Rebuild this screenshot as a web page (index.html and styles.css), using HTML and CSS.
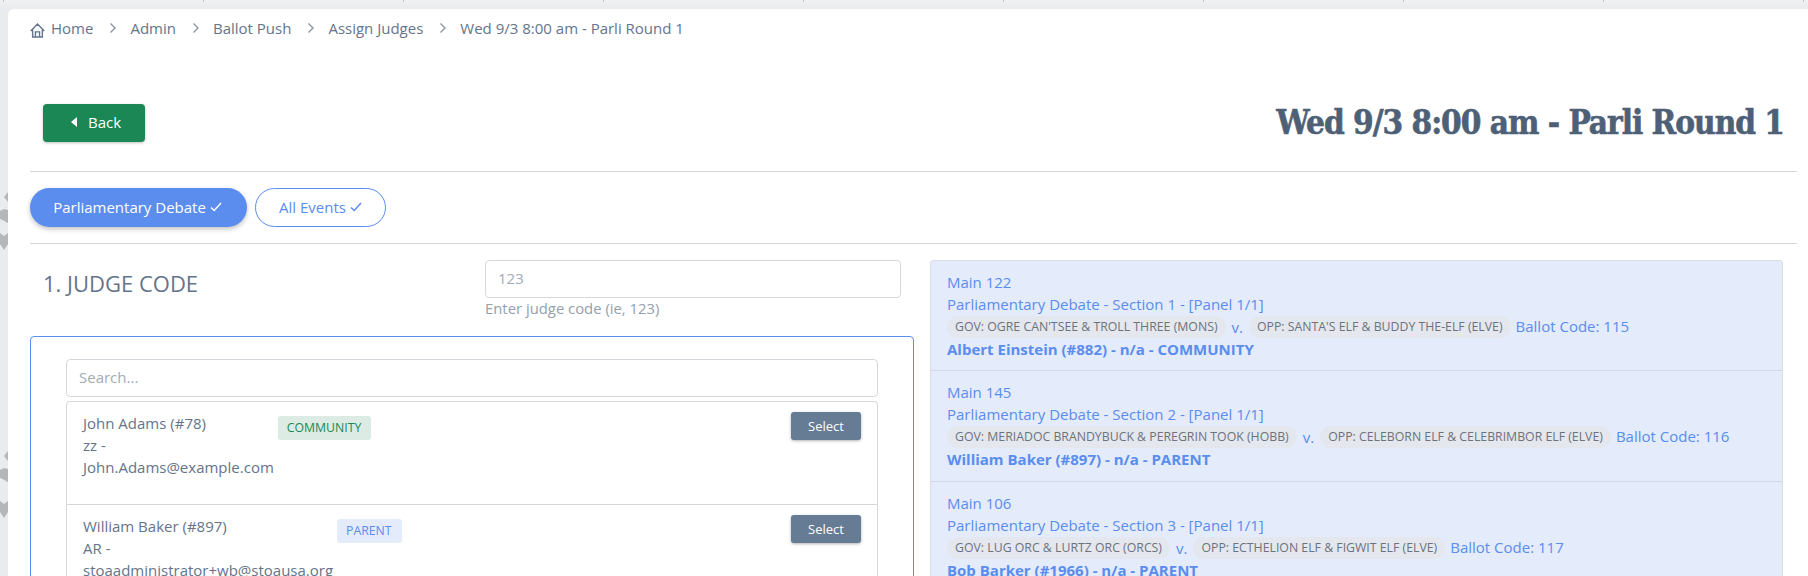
FILE: index.html
```html
<!DOCTYPE html>
<html lang="en">
<head>
<meta charset="utf-8">
<title>Assign Judges</title>
<link rel="stylesheet" href="styles.css">
</head>
<body>
<div class="ticks" aria-hidden="true"></div>
<div class="backdrop" aria-hidden="true">
  <svg class="chevrons" width="8" height="406" viewBox="0 0 8 406"><g fill="#b5b6b8"><path d="M8 22v10l-4-5z"/><path d="M0 41c3-2 5-2 8-1v13c-3-1-4-3-8-4z"/><path d="M0 63l4 3 4-3v11l-4 6-4-6z"/><path d="M8 281v10l-4-5z"/><path d="M0 300c3-2 5-2 8-1v13c-3-1-4-3-8-4z"/><path d="M0 331l4 3 4-3v11l-4 6-4-6z"/></g></svg>
</div>
<main class="card">
  <nav class="crumbs">
    <svg class="home" width="15" height="15" viewBox="0 0 16 16" fill="none" stroke="#64748b" stroke-width="1.5"><path d="M.8 8.500L8 1.200 15.200 8.500M2.800 6.500V15h10.400V6.500M5.800 15V9.500h4.400V15"/></svg>
    <span>Home</span><svg class="sep" width="8" height="12" viewBox="0 0 8 12" fill="none" stroke="#8a96a6" stroke-width="1.4"><path d="M1.500 1.500L6 6l-4.500 4.500"/></svg>
    <span>Admin</span><svg class="sep" width="8" height="12" viewBox="0 0 8 12" fill="none" stroke="#8a96a6" stroke-width="1.4"><path d="M1.500 1.500L6 6l-4.500 4.500"/></svg>
    <span>Ballot Push</span><svg class="sep" width="8" height="12" viewBox="0 0 8 12" fill="none" stroke="#8a96a6" stroke-width="1.4"><path d="M1.500 1.500L6 6l-4.500 4.500"/></svg>
    <span>Assign Judges</span><svg class="sep" width="8" height="12" viewBox="0 0 8 12" fill="none" stroke="#8a96a6" stroke-width="1.4"><path d="M1.500 1.500L6 6l-4.500 4.500"/></svg>
    <span>Wed 9/3 8:00 am - Parli Round 1</span>
  </nav>
  <header class="head">
    <button class="back"><svg width="6" height="10" viewBox="0 0 6 10" fill="#fff"><path d="M6 0v10L0 5z"/></svg>Back</button>
    <h1>Wed 9/3 8:00 am - Parli Round 1</h1>
  </header>
  <div class="pills">
    <button class="pill pill-on">Parliamentary Debate<svg width="12" height="10" viewBox="0 0 12 10" fill="none" stroke="#fff" stroke-width="1.4"><path d="M1 5.500l3.200 3L11 1"/></svg></button>
    <button class="pill pill-off">All Events<svg width="12" height="10" viewBox="0 0 12 10" fill="none" stroke="#5a8dee" stroke-width="1.4"><path d="M1 5.500l3.200 3L11 1"/></svg></button>
  </div>
  <div class="cols">
    <section class="left">
      <div class="code-row">
        <h2>1. JUDGE CODE</h2>
        <div class="code-field">
          <input class="input" placeholder="123">
          <small>Enter judge code (ie, 123)</small>
        </div>
      </div>
      <div class="picker">
        <input class="input" placeholder="Search...">
        <ul class="judges">
          <li class="judge">
            <div class="judge-info"><div>John Adams (#78)<br>zz -<br>John.Adams@example.com</div><span class="tag tag-green">COMMUNITY</span></div>
            <button class="select">Select</button>
          </li>
          <li class="judge">
            <div class="judge-info"><div>William Baker (#897)<br>AR -<br>stoaadministrator+wb@stoausa.org</div><span class="tag tag-blue">PARENT</span></div>
            <button class="select">Select</button>
          </li>
        </ul>
      </div>
    </section>
    <section class="right">
      <article class="ballot">
        <div>Main 122</div>
        <div>Parliamentary Debate - Section 1 - [Panel 1/1]</div>
        <div class="teams"><span class="team">GOV: OGRE CAN'TSEE &amp; TROLL THREE (MONS)</span><span>v.</span><span class="team">OPP: SANTA'S ELF &amp; BUDDY THE-ELF (ELVE)</span><span class="code">Ballot Code: 115</span></div>
        <strong>Albert Einstein (#882) - n/a - COMMUNITY</strong>
      </article>
      <article class="ballot">
        <div>Main 145</div>
        <div>Parliamentary Debate - Section 2 - [Panel 1/1]</div>
        <div class="teams"><span class="team">GOV: MERIADOC BRANDYBUCK &amp; PEREGRIN TOOK (HOBB)</span><span>v.</span><span class="team">OPP: CELEBORN ELF &amp; CELEBRIMBOR ELF (ELVE)</span><span class="code">Ballot Code: 116</span></div>
        <strong>William Baker (#897) - n/a - PARENT</strong>
      </article>
      <article class="ballot">
        <div>Main 106</div>
        <div>Parliamentary Debate - Section 3 - [Panel 1/1]</div>
        <div class="teams"><span class="team">GOV: LUG ORC &amp; LURTZ ORC (ORCS)</span><span>v.</span><span class="team">OPP: ECTHELION ELF &amp; FIGWIT ELF (ELVE)</span><span class="code">Ballot Code: 117</span></div>
        <strong>Bob Barker (#1966) - n/a - PARENT</strong>
      </article>
    </section>
  </div>
</main>
</body>
</html>
```
FILE: styles.css
```css
* { box-sizing: border-box; }
html, body { height: 100%; }
body {
  margin: 0;
  height: 576px;
  overflow: hidden;
  background: linear-gradient(#f0f1f1, #e9ebee 9px, #e9ebee);
  font-family: "Open Sans", sans-serif;
  font-size: 15px;
  color: #64748b;
  display: flex;
  padding: 9px 0 0 8px;
  position: relative;
}
.ticks {
  position: absolute;
  left: 3px;
  top: 0;
  right: 0;
  height: 2px;
  background: linear-gradient(90deg, #c2c3c5 1px, transparent 1px) 0 0 / 200px 2px repeat-x;
}
.backdrop { position: absolute; left: 0; top: 170px; width: 8px; height: 406px; }
.chevrons { display: block; }
.card {
  flex: 1;
  min-width: 0;
  background: #fff;
  border-radius: 6px 0 0 0;
  padding: 0 0 0 22px;
  overflow: hidden;
}
.crumbs { display: flex; align-items: center; height: 36px; padding-top: 1px; color: #64748b; }
.home { margin-right: 6px; margin-top: 5px; }
.sep { margin: 0 13px 0 16px; }
.head {
  margin-right: 11px;
  height: 127px;
  padding: 59px 13px 0 13px;
  border-bottom: 1px solid #d6d8db;
  display: flex;
  justify-content: space-between;
  align-items: flex-start;
}
.back {
  width: 102px;
  height: 38px;
  padding: 0 0 2px 28px;
  border: 0;
  border-radius: 4px;
  background: #1a8754;
  color: #fff;
  font: 15px "Open Sans", sans-serif;
  display: flex;
  align-items: center;
  gap: 11px;
  box-shadow: 0 1px 3px rgba(0,0,0,.25);
}
h1 {
  margin: 1px 0 0;
  font: bold 33px/36px "DejaVu Serif Condensed", "DejaVu Serif", serif;
  -webkit-text-stroke: .6px #4e6076;
  color: #4e6076;
  letter-spacing: -1px;
}
.pills {
  margin-right: 11px;
  height: 72px;
  padding-top: 16px;
  border-bottom: 1px solid #d6d8db;
  display: flex;
  gap: 8px;
  align-items: flex-start;
}
.pill {
  height: 39px;
  border-radius: 20px;
  font: 15px "Open Sans", sans-serif;
  padding: 0 0 2px;
  display: flex;
  align-items: center;
  justify-content: center;
  gap: 4px;
}
.pill-on { width: 217px; padding-right: 2px; background: #5a8dee; color: #fff; border: 0; box-shadow: 0 2px 5px rgba(0,0,0,.25); }
.pill-off { width: 131px; background: #fff; color: #5a8dee; border: 1px solid #5a8dee; }
.cols { margin-right: 25px; display: flex; gap: 16px; align-items: flex-start; }
.left { width: 884px; flex: none; }
.right {
  flex: 1;
  margin-top: 16px;
  background: #e4ebfa;
  border: 1px solid #d8dde6;
  border-bottom: 0;
  border-radius: 4px 4px 0 0;
  color: #5a8dee;
}
.code-row { display: flex; padding: 16px 13px 0 13px; height: 92px; }
h2 {
  margin: 0;
  width: 442px;
  padding-top: 8px;
  font: 400 22px/30px "Open Sans", sans-serif;
  color: #64748b;
}
.code-field { flex: 1; }
.input {
  display: block;
  width: 100%;
  height: 38px;
  border: 1px solid #d6d8de;
  border-radius: 4px;
  padding: 0 12px 2px;
  font: 15px "Open Sans", sans-serif;
  color: #64748b;
  background: #fff;
}
.input::placeholder { color: #a2abb8; opacity: 1; }
small { display: block; margin-top: -1px; font-size: 14.85px; line-height: 22px; color: #94a0ae; }
.picker {
  height: 300px;
  border: 1px solid #5a8dee;
  border-radius: 4px;
  padding: 22px 35px 0 35px;
}
.judges { list-style: none; margin: 4px 0 0; padding: 0; border: 1px solid #d6d8db; border-radius: 4px; border-bottom: 0; }
.judge {
  height: 103px;
  padding: 10px 16px 0 16px;
  display: flex;
  justify-content: space-between;
  align-items: flex-start;
  border-bottom: 1px solid #d6d8db;
  line-height: 22px;
}
.judge-info { display: flex; align-items: flex-start; gap: 4px; }
.tag {
  margin-top: 4px;
  height: 24px;
  line-height: 24px;
  padding: 0 10px 0 9px;
  font-size: 12.25px;
  border-radius: 3px;
}
.tag-green { background: #dcebe4; color: #1a8754; }
.tag-blue { background: #e4ebfa; color: #5a8dee; }
.select {
  width: 70px;
  height: 28px;
  padding: 0;
  border: 0;
  border-radius: 3px;
  background: #667b94;
  color: #fff;
  font: 13px "Open Sans", sans-serif;
  box-shadow: 0 1px 3px rgba(0,0,0,.3);
}
.ballot {
  height: 111px;
  padding: 10px 16px 0;
  line-height: 22px;
  border-bottom: 1px solid #d3d8e2;
}
.ballot:first-child { height: 110px; }
.teams { display: flex; align-items: center; gap: 6px; height: 22px; margin-top: 1px; white-space: nowrap; }
.team {
  font-size: 12.3px;
  line-height: 22px;
  background: #e4e7ed;
  color: #6b737d;
  padding: 0 8px;
  border-radius: 11px;
}
.code { margin-top: -3px; margin-left: -1px; }
.ballot strong { font-weight: 700; display: block; }
```
